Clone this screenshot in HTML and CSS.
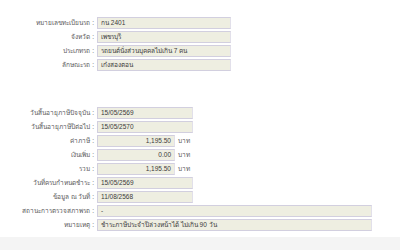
FILE: index.html
```html
<!DOCTYPE html>
<html lang="th">
<head>
    <meta charset="UTF-8">
    <title>ข้อมูลภาษีรถ</title>
    <link rel="stylesheet" href="styles.css">
</head>
<body>
    <div class="page">
        <div class="section">
            <div class="row">
                <span class="label">หมายเลขทะเบียนรถ :</span>
                <span class="field wide">กน 2401</span>
            </div>
            <div class="row">
                <span class="label">จังหวัด :</span>
                <span class="field wide">เพชรบุรี</span>
            </div>
            <div class="row">
                <span class="label">ประเภทรถ :</span>
                <span class="field wide">รถยนต์นั่งส่วนบุคคลไม่เกิน 7 คน</span>
            </div>
            <div class="row">
                <span class="label">ลักษณะรถ :</span>
                <span class="field wide">เก๋งสองตอน</span>
            </div>
        </div>

        <div class="section tax">
            <div class="row">
                <span class="label">วันสิ้นอายุภาษีปัจจุบัน :</span>
                <span class="field date">15/05/2569</span>
            </div>
            <div class="row">
                <span class="label">วันสิ้นอายุภาษีปีต่อไป :</span>
                <span class="field date">15/05/2570</span>
            </div>
            <div class="row">
                <span class="label">ค่าภาษี :</span>
                <span class="field money">1,195.50</span>
                <span class="unit">บาท</span>
            </div>
            <div class="row">
                <span class="label">เงินเพิ่ม :</span>
                <span class="field money">0.00</span>
                <span class="unit">บาท</span>
            </div>
            <div class="row">
                <span class="label">รวม :</span>
                <span class="field money">1,195.50</span>
                <span class="unit">บาท</span>
            </div>
            <div class="row">
                <span class="label">วันที่ครบกำหนดชำระ :</span>
                <span class="field date">15/05/2569</span>
            </div>
            <div class="row">
                <span class="label">ข้อมูล ณ วันที่ :</span>
                <span class="field date">11/08/2568</span>
            </div>
            <div class="row">
                <span class="label">สถานะการตรวจสภาพรถ :</span>
                <span class="field long">-</span>
            </div>
            <div class="row">
                <span class="label">หมายเหตุ :</span>
                <span class="field long">ชำระภาษีประจำปีล่วงหน้าได้ ไม่เกิน 90 วัน</span>
            </div>
        </div>
    </div>
    <div class="footer"></div>
</body>
</html>
```

FILE: styles.css
```css
* {
    margin: 0;
    padding: 0;
    box-sizing: border-box;
}

body {
    font-family: "Liberation Sans", Tahoma, sans-serif;
    font-size: 6.5px;
    color: #3a3a3a;
    background: #fff;
}

.page {
    padding-top: 17px;
    height: 237px;
}

.tax {
    margin-top: 36px;
}

.row {
    display: flex;
    align-items: center;
    height: 12px;
    margin-bottom: 2px;
}

.label {
    width: 97px;
    padding-right: 3px;
    text-align: right;
    color: #5a5a5a;
    white-space: nowrap;
}

.field {
    height: 12px;
    line-height: 10px;
    padding: 0 3px;
    background: #eeeee1;
    border: 1px solid #d2cfdf;
    border-right-color: #e2e0ea;
    color: #3a3a3a;
    white-space: nowrap;
    overflow: hidden;
}

.wide {
    width: 134px;
}

.date {
    width: 96px;
}

.money {
    width: 78px;
    text-align: right;
}

.long {
    width: 275px;
}

.unit {
    margin-left: 3px;
    color: #5a5a5a;
}

.footer {
    height: 13px;
    background: #f4f4f4;
}
```
